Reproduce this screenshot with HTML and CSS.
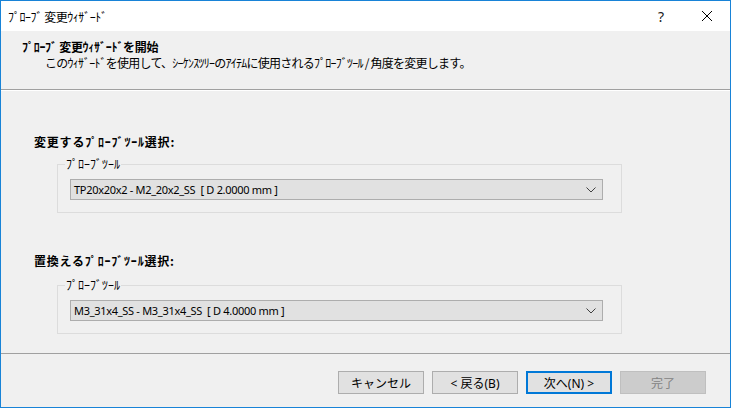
FILE: index.html
```html
<!DOCTYPE html>
<html lang="ja">
<head>
    <meta charset="UTF-8">
    <title>ﾌﾟﾛｰﾌﾞ 変更ｳｨｻﾞｰﾄﾞ</title>
    <link rel="stylesheet" href="styles.css">
</head>
<body>
    <div class="window">
        <div class="titlebar">
            <span class="titleText">ﾌﾟﾛｰﾌﾞ 変更ｳｨｻﾞｰﾄﾞ</span>
            <span class="titleButton">?</span>
            <span class="titleButton">
                <svg width="10" height="10" viewBox="0 0 10 10"><path d="M0 0L10 10M10 0L0 10" stroke="#000" stroke-width="1" fill="none"/></svg>
            </span>
        </div>
        <div class="header">
            <p class="headerTitle">ﾌﾟﾛｰﾌﾞ 変更ｳｨｻﾞｰﾄﾞを開始</p>
            <p class="headerText">このｳｨｻﾞｰﾄﾞを使用して、ｼｰｹﾝｽﾂﾘｰのｱｲﾃﾑに使用されるﾌﾟﾛｰﾌﾞﾂｰﾙ / 角度を変更します。</p>
        </div>
        <div class="content">
            <div class="section">
                <p class="sectionLabel">変更するﾌﾟﾛｰﾌﾞﾂｰﾙ選択:</p>
                <fieldset class="group">
                    <legend>ﾌﾟﾛｰﾌﾞﾂｰﾙ</legend>
                    <div class="combo">
                        <span>TP20x20x2 - M2_20x2_SS&nbsp;&nbsp;[ D 2.0000 mm ]</span>
                        <svg width="10" height="6" viewBox="0 0 10 6"><path d="M0.5 0.5L5 5L9.5 0.5" stroke="#404040" stroke-width="1" fill="none"/></svg>
                    </div>
                </fieldset>
            </div>
            <div class="section">
                <p class="sectionLabel">置換えるﾌﾟﾛｰﾌﾞﾂｰﾙ選択:</p>
                <fieldset class="group">
                    <legend>ﾌﾟﾛｰﾌﾞﾂｰﾙ</legend>
                    <div class="combo">
                        <span>M3_31x4_SS - M3_31x4_SS&nbsp;&nbsp;[ D 4.0000 mm ]</span>
                        <svg width="10" height="6" viewBox="0 0 10 6"><path d="M0.5 0.5L5 5L9.5 0.5" stroke="#404040" stroke-width="1" fill="none"/></svg>
                    </div>
                </fieldset>
            </div>
        </div>
        <div class="footer">
            <button class="button">キャンセル</button>
            <button class="button">&lt;&nbsp;戻る(B)</button>
            <button class="button default">次へ(N)&nbsp;&gt;</button>
            <button class="button disabled">完了</button>
        </div>
    </div>
</body>
</html>
```

FILE: styles.css
```css
html, body {
    margin: 0;
    padding: 0;
}
body {
    font-family: "Noto Sans", "Noto Sans CJK JP", sans-serif;
    font-size: 12px;
    color: #000000;
}
p {
    margin: 0;
}
.window {
    box-sizing: border-box;
    width: 731px;
    height: 408px;
    border: 1px solid #1883d7;
    background-color: #f0f0f0;
    display: flex;
    flex-direction: column;
}
.titlebar {
    height: 30px;
    flex-shrink: 0;
    background-color: #ffffff;
    display: flex;
    align-items: center;
}
.titleText {
    flex: 1;
    padding-left: 7px;
    font-family: "Noto Sans CJK JP", sans-serif;
    letter-spacing: -0.5px;
}
.titleButton {
    width: 46px;
    height: 30px;
    display: flex;
    align-items: center;
    justify-content: center;
    font-size: 14px;
    color: #202020;
}
.header {
    height: 59px;
    flex-shrink: 0;
    border-bottom: 1px solid #a0a0a0;
    padding: 7px 0 0 21px;
    box-sizing: border-box;
}
.headerTitle {
    font-family: "Noto Sans CJK JP", sans-serif;
    font-weight: bold;
    line-height: 17px;
    letter-spacing: -0.3px;
}
.headerText {
    font-family: "Noto Sans CJK JP", sans-serif;
    padding-left: 23px;
    line-height: 16px;
    letter-spacing: -0.75px;
}
.content {
    flex: 1;
    padding: 43px 0 0 32px;
    display: flex;
    flex-direction: column;
    gap: 40px;
    border-top: 1px solid #ffffff;
    border-bottom: 1px solid #a0a0a0;
}
.sectionLabel {
    font-family: "Noto Sans CJK JP", sans-serif;
    font-weight: bold;
    line-height: 16px;
    padding-left: 1px;
    letter-spacing: 0.8px;
}
.group {
    box-sizing: border-box;
    width: 565px;
    margin: 6px 0 0 24px;
    padding: 7px 0 12px 12px;
    border: 1px solid #dcdcdc;
}
.section + .section .group {
    margin-top: 8px;
}
.group legend {
    font-family: "Noto Sans CJK JP", sans-serif;
    line-height: 16px;
    padding: 0 1px;
    margin-left: -5px;
}
.combo {
    box-sizing: border-box;
    width: 533px;
    height: 21px;
    background-color: #e1e1e1;
    border: 1px solid #adadad;
    display: flex;
    align-items: center;
    justify-content: space-between;
    padding: 0 6px 0 3px;
    font-size: 11px;
    letter-spacing: -0.3px;
}
.footer {
    height: 53px;
    flex-shrink: 0;
    display: flex;
    justify-content: flex-end;
    align-items: flex-start;
    gap: 8px;
    padding: 17px 24px 0 0;
    box-sizing: border-box;
}
.button {
    box-sizing: border-box;
    width: 86px;
    height: 23px;
    background-color: #e1e1e1;
    border: 1px solid #adadad;
    font-family: "Noto Sans", "Noto Sans CJK JP", sans-serif;
    font-size: 12px;
    color: #000000;
    padding: 0;
}
.default {
    border: 2px solid #0078d7;
}
.disabled {
    background-color: #cccccc;
    border-color: #bfbfbf;
    color: #838383;
}
```
